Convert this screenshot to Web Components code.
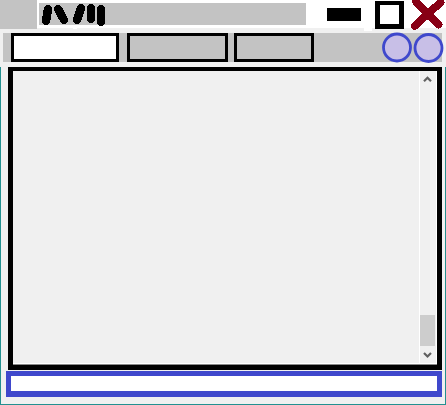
<!DOCTYPE html>
<html lang="en">
<head>
<meta charset="utf-8">
<title>Window</title>
<style>html,body{margin:0;background:#f0f0f0;overflow:hidden}</style>
</head>
<body>
<app-window>
  <title-bar slot="title"></title-bar>
  <tool-bar slot="tools">
    <tab-box style="--w:108px;--bg:#fff"></tab-box>
    <tab-box style="--w:101px;margin-left:8px"></tab-box>
    <tab-box style="--w:80px;margin-left:6px"></tab-box>
    <round-buttons></round-buttons>
  </tool-bar>
  <content-pane><scroll-bar></scroll-bar></content-pane>
  <input-field></input-field>
</app-window>
<script>
const define = (name, markup) => {
  const t = document.createElement('template');
  t.innerHTML = markup;
  customElements.define(name, class extends HTMLElement {
    constructor() {
      super();
      this.attachShadow({mode: 'open'}).append(t.content.cloneNode(true));
    }
  });
};
define('app-window', `<style>
  :host{display:flex;flex-direction:column;width:446px;height:405px;background:#f0f0f0}
  .body{box-sizing:border-box;height:338px;border:1px solid #239090;border-top:0;padding-left:5px}
</style><slot name="title"></slot><slot name="tools"></slot><div class="body"><slot></slot></div>`);
define('title-bar', `<style>
  :host{display:flex;height:33px}
  svg{display:block}
</style><svg width="446" height="33" viewBox="0 0 446 33">
  <g shape-rendering="crispEdges">
    <path fill="#fff" d="M37 0H446V28H37ZM73 28h4v1h-4ZM364 28h8v3h-8Z"/>
    <path fill="#c3c3c3" d="M0 0H37V29H0ZM39 3H306V25H39Z"/>
    <path d="M327 8h34v13h-34Z"/>
    <path fill-rule="evenodd" d="M375 1h29v28h-29ZM380 5v19h19V5Z"/>
  </g>
  <g fill="none" shape-rendering="crispEdges" stroke="#000" stroke-width="8.4" stroke-linecap="round">
    <path d="M48 9L46 21M58.2 9L64 20M81 8.2L77 20M91 8.2V19M101 9V21.8"/>
  </g>
  <path fill="none" shape-rendering="crispEdges" stroke="#880015" stroke-width="7.8" stroke-linecap="round" d="M416 1.5L438.5 24.5M440.5 2.5L414.8 25.8"/>
</svg>`);
define('tool-bar', `<style>
  :host{display:flex;box-sizing:border-box;width:439px;height:29px;margin:0 0 5px 3px;padding-left:8px;background:#c3c3c3}
</style><slot></slot>`);
define('tab-box', `<style>
  :host{display:block;box-sizing:border-box;flex:none;width:var(--w);height:29px;border:3px solid #000;background:var(--bg,#c3c3c3)}
</style>`);
define('round-buttons', `<style>
  :host{display:block;margin-left:auto;width:61px;height:30px;flex:none}
  svg{display:block;overflow:visible}
</style><svg width="61" height="30" viewBox="381 33 61 30">
  <g fill="#c8bfe7" stroke="#3f48cc" stroke-width="2.8"><circle cx="397" cy="47.5" r="13.5"/><circle cx="428.5" cy="48" r="13.5"/></g>
</svg>`);
define('content-pane', `<style>
  :host{display:flex;justify-content:flex-end;box-sizing:border-box;width:434px;height:303px;margin-left:2px;border:5px solid #000;border-top-width:4px;background:#f0f0f0;box-shadow:inset 0 -1px #888,inset 0 -2px #fff}
</style><slot></slot>`);
define('scroll-bar', `<style>
  :host{display:flex;flex-direction:column;box-sizing:border-box;width:18px;height:292px;border:solid #fff;border-width:0 1px;padding-right:1px}
  svg{display:block}
  .track{flex:1;display:flex;align-items:flex-end}
  .thumb{width:15px;height:31px;background:#cdcdcd}
  path{fill:none;stroke:#606060;stroke-width:2.2}
</style><svg width="15" height="16"><path d="M4 10.3L7.5 6.8L11 10.3"/></svg>
<div class="track"><div class="thumb"></div></div>
<svg width="15" height="17"><path d="M4 7L7.5 10.5L11 7"/></svg>`);
define('input-field', `<style>
  :host{display:block;box-sizing:border-box;width:436px;height:26px;margin-top:1px;border:5px solid #3f48cc;border-bottom-color:#3f48cc;border-bottom-width:6px;background:#fff}
</style>`);
</script>
</body>
</html>
